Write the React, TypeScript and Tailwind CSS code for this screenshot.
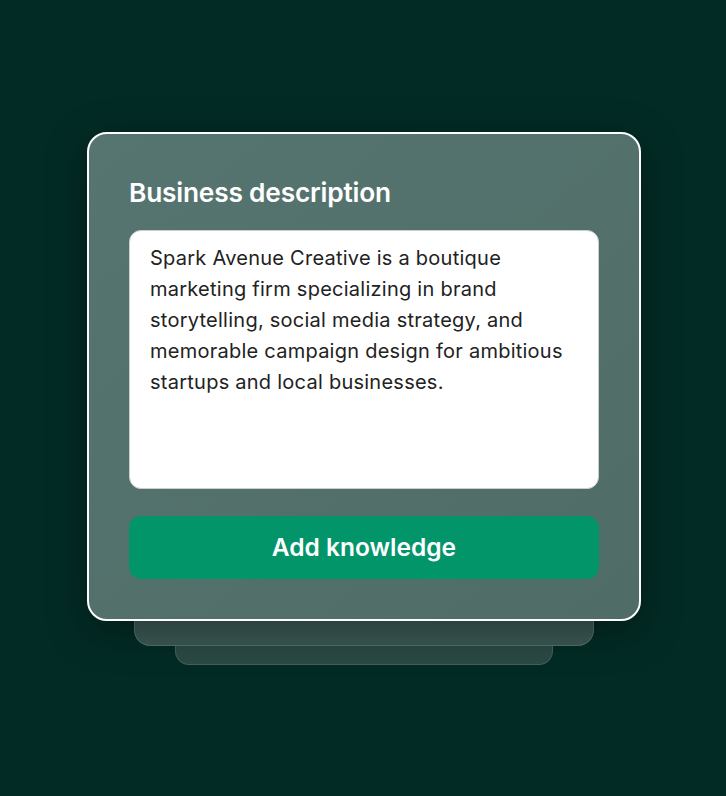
const lines = [
  'Spark Avenue Creative is a boutique',
  'marketing firm specializing in brand',
  'storytelling, social media strategy, and',
  'memorable campaign design for ambitious',
  'startups and local businesses.',
]

export default function App() {
  return (
    <div
      className="min-h-[796px] w-full bg-[#032b25] flex flex-col items-center justify-center"
      style={{ fontFamily: 'Inter, "Noto Sans", sans-serif' }}
    >
      {/* Main card */}
      <div className="relative z-10 ml-[2px] w-[554px] h-[489px] rounded-[20px] border-2 border-white bg-gradient-to-br from-[#577570] to-[#4f6c67] shadow-[0_10px_40px_rgba(0,0,0,0.35)] px-[40px] pt-[42px] pb-[40px] flex flex-col">
        <h2 className="text-[26.3px] leading-[34px] font-semibold text-white tracking-[-0.2px]">
          Business description
        </h2>
        <div className="mt-[20px] h-[260px] rounded-[12px] bg-white border border-[#c9cfcd] pl-[20px] pr-[10px] pt-[12px]">
          <p className="text-[20px] leading-[31px] tracking-[0.25px] text-[#222222]">
            {lines.map((l) => (
              <span key={l} className="block whitespace-nowrap">
                {l}
              </span>
            ))}
          </p>
        </div>
        <button className="mt-[27px] h-[63px] w-full rounded-[12px] bg-[#03956a] text-white text-[24.5px] font-semibold">
          Add knowledge
        </button>
      </div>
      {/* Stacked layers behind */}
      <div className="ml-[2px] w-[460px] h-[25px] rounded-b-[16px] bg-[#3b5854] border border-t-0 border-[#55706b]" />
      <div className="ml-[2px] w-[378px] h-[19px] rounded-b-[14px] bg-[#2b4944] border border-t-0 border-[#45605b]" />
    </div>
  )
}
